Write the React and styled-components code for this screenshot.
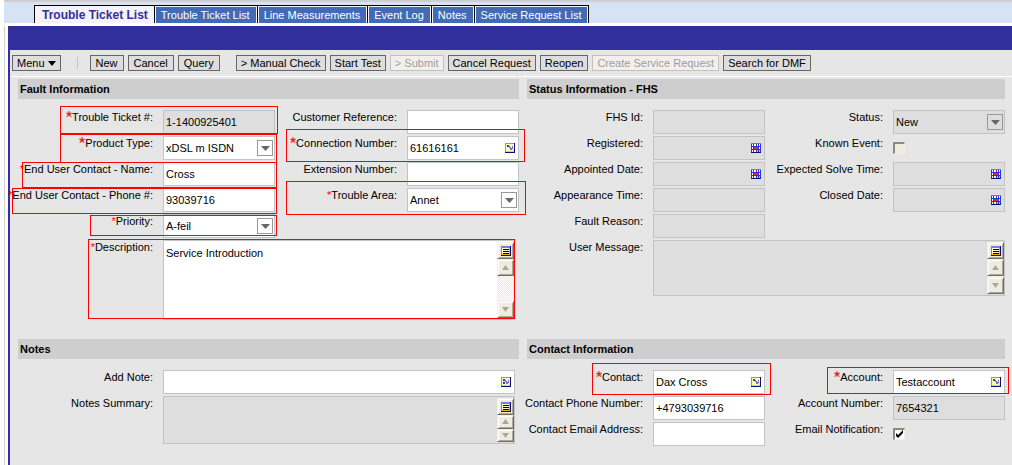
import React from "react";
import styled, { createGlobalStyle, css } from "styled-components";

const GlobalStyle = createGlobalStyle`
  * { box-sizing: border-box; }
  body {
    margin: 0;
    background: #fff;
    color: #000;
    font: 11px/14px "Liberation Sans", Arial, sans-serif;
  }
  button, input, select, textarea { font: inherit; color: inherit; border-radius: 0; }
`;

/* ---------- page frame ---------- */

const Page = styled.div`
  display: flex;
  flex-direction: column;
  min-height: 100vh;
  padding-left: 4px;
`;

const TabBar = styled.nav`
  display: flex;
  height: 23px;
  padding: 3px 0 0 30px;
  border-top: 2px solid #cecece;
  background: #d6e3f5;
`;

const TabStrip = styled.div`
  display: flex;
  border: solid #000;
  border-width: 1px 1px 0;
  background: #f5f2fa;
`;

const Tab = styled.a`
  display: block;
  margin: 1px 1px 0;
  padding: 0 6px 0 5px;
  background: #416bb4;
  color: #fff;
  line-height: 16px;
  text-decoration: none;
  white-space: nowrap;

  ${(p) =>
    p.$active &&
    css`
      padding: 0 5px 0 6px;
      background: #f5f2fa;
      color: #31309c;
      font-size: 12px;
      font-weight: bold;
    `}
`;

const TabDivider = styled.span`
  width: 1px;
  background: #000;
`;

const Frame = styled.div`
  flex: 1;
  display: flex;
  margin-top: 3px;
  padding-left: 3px;
  border-left: 1px solid #cecece;
`;

const Applet = styled.main`
  flex: 1;
  min-width: 0;
  border-left: 2px solid #31309c;
  background: #e6e6e6;
`;

const TitleBand = styled.div`
  height: 24px;
  background: #31309c;
`;

/* ---------- toolbar ---------- */

const Toolbar = styled.div`
  display: flex;
  align-items: center;
  gap: 16px;
  margin-left: 1px;
  padding: 5px 1px;
  border-bottom: 1px solid #fff;
`;

const ButtonGroup = styled.div`
  display: flex;
  gap: 4px;
`;

const ToolButton = styled.button`
  display: flex;
  align-items: center;
  gap: 3px;
  height: 16px;
  padding: 0 ${(p) => (p.$roomy ? 5 : 4)}px;
  border: 1px solid #666;
  background: #dedede;
  line-height: 14px;
  white-space: nowrap;

  &:disabled {
    border-color: #c4c0bb;
    background: #f3f0eb;
    color: #9c9ca5;
  }
`;

const Separator = styled.span`
  width: 1px;
  height: 12px;
  margin-right: -4px;
  background: #c3c3c3;
`;

/* ---------- form panels ---------- */

const Panels = styled.div`
  display: grid;
  grid-template-columns: minmax(0, 501fr) minmax(0, 478fr);
  gap: 19px 8px;
  padding: 2px 7px 19px 8px;
`;

const PanelTitle = styled.h2`
  margin: 0 0 11px;
  padding: 0 2px;
  background: #cecece;
  font-size: 11px;
  line-height: 20px;
`;

const PanelBody = styled.div`
  display: grid;
  grid-template-columns: ${(p) => p.$columns};
  gap: 2px 0;
  align-items: start;
`;

const Cell = styled.div`
  position: relative;
  display: flex;
  grid-column: ${(p) => p.$column};
  min-width: 0;
`;

const Label = styled.label`
  flex: none;
  display: flex;
  justify-content: flex-end;
  width: ${(p) => p.$width}px;
  padding-right: 10px;
  white-space: nowrap;
`;

const Star = styled.span`
  color: #f00;
`;

const StarIcon = styled.svg`
  width: 6px;
  height: 8px;
`;

const Highlight = styled.div`
  position: absolute;
  inset: ${(p) => p.$inset};
  z-index: 1;
  border: 1px solid #f00;
  pointer-events: none;
`;

/* ---------- controls ---------- */

const fieldFace = css`
  border: 1px solid #c3c3c3;
  background: ${(p) => (p.$shaded ? "#dedede" : "#fff")};
`;

const FieldBox = styled.div`
  ${fieldFace}
  flex: 1;
  display: flex;
  align-items: center;
  min-width: 0;
  height: 24px;
  margin-right: ${(p) => p.$trim || 0}px;
`;

const bare = css`
  flex: 1;
  width: 100%;
  min-width: 0;
  margin: 0;
  border: 0;
  outline: 0;
  background: transparent;
  appearance: none;
`;

const TextInput = styled.input`
  ${bare}
  height: 22px;
  padding: 0 2px;
`;

const SelectInput = styled.select`
  ${bare}
  height: 22px;
  padding: 0 2px;
`;

const SelectArrow = styled.span`
  flex: none;
  display: grid;
  place-items: center;
  width: 16px;
  height: 16px;
  margin-right: 1px;
  border: 1px solid #999;
  background: ${(p) => (p.$shaded ? "#dedede" : "#fff")};
  pointer-events: none;
`;

const IconButton = styled.button`
  flex: none;
  width: 10px;
  height: 10px;
  margin-right: 3px;
  padding: 0;
  border: 0;
  background: none;

  svg { display: block; }
`;

const MemoBox = styled.div`
  ${fieldFace}
  flex: 1;
  display: flex;
  min-width: 0;
  height: ${(p) => p.$height}px;
  margin-right: ${(p) => p.$trim || 0}px;
  padding: 1px 0;
`;

const MemoInput = styled.textarea`
  ${bare}
  height: 100%;
  padding: 4px 2px;
  resize: none;
  overflow: hidden;
`;

const MemoRail = styled.div`
  flex: none;
  display: flex;
  flex-direction: column;
  width: 17px;
  background: repeating-conic-gradient(#fff 0 25%, #ece9d8 0 50%) 0 0 / 2px 2px;
`;

const RailButton = styled.button`
  flex: ${(p) => (p.$fixed ? "none" : "0 1 17px")};
  display: grid;
  place-items: center;
  width: 17px;
  height: 17px;
  min-height: 0;
  margin-top: ${(p) => (p.$last ? "auto" : "0")};
  padding: 0;
  border: 1px solid;
  border-color: #f1efe2 #716f64 #716f64 #f1efe2;
  background: #efebde;
  box-shadow: inset 1px 1px #fff, inset -1px -1px #aca899;
`;

const CheckWrap = styled.span`
  position: relative;
  width: 12px;
  height: 12px;
  margin-top: 6px;
`;

const CheckInput = styled.input`
  display: block;
  width: 12px;
  height: 12px;
  margin: 0;
  border: solid;
  border-width: 2px 1px 1px 2px;
  border-color: #8c8a7c #f1efe2 #f1efe2 #8c8a7c;
  background: ${(p) => (p.disabled ? "#f0ebde" : "#fff")};
  appearance: none;
`;

const CheckMark = styled.svg`
  position: absolute;
  inset: 0;
  pointer-events: none;
`;

/* ---------- drawings ---------- */

const Triangle = ({ up, color = "#666", width = 9 }) => (
  <svg width={width} height="5" viewBox="0 0 10 5" preserveAspectRatio="none" aria-hidden="true">
    <path d={up ? "M0 5 L5 0 L10 5Z" : "M0 0 L10 0 L5 5Z"} fill={color} />
  </svg>
);

const PickIcon = ({ multi }) => (
  <svg width="10" height="10" viewBox="0 0 10 10" shapeRendering="crispEdges" aria-hidden="true">
    <path fill="#ffffb0" d="M0 0h10v10H0z" />
    <path fill="#8c8cf0" d="M0 0h9v1H1v8H0z" />
    <path fill="#0c0c82" d="M9 0h1v10H0V9h9z" />
    <path fill="#ffd23c" d="M1 8h8v1H1zM8 6h1v2H8z" />
    <path fill="#3131ce" d={multi ? "M2 2h2v2H2zM2 5h2v2H2z" : "M2 2h2v2H2z"} />
    <path fill="#7373c6" d="M4 3h1v2H4zM5 4h1v3H5zM6 5h1v2H6zM7 3h1v3H7z" />
  </svg>
);

const CalendarIcon = () => (
  <svg width="10" height="10" viewBox="0 0 10 10" shapeRendering="crispEdges" aria-hidden="true">
    <path fill="#3131ce" d="M0 0h10v10H0z" />
    <path fill="#7373e0" d="M0 0h10v1H0z" />
    <path fill="#fff" d="M1 1h1v2H1zM3 1h2v2H3zM6 1h1v2H6zM8 1h1v2H8zM1 4h1v2H1zM8 4h1v2H8z" />
    <path fill="#ffffb5" d="M1 7h1v2H1zM3 7h2v2H3z" />
    <path fill="#ce3131" d="M3 4h4v2H3z" />
    <path fill="#ffbd18" d="M6 7h1v2H6zM8 7h1v2H8z" />
    <path fill="#0c0c82" d="M0 9h10v1H0z" />
  </svg>
);

const ListIcon = () => (
  <svg width="10" height="10" viewBox="0 0 10 10" shapeRendering="crispEdges" aria-hidden="true">
    <path fill="#ffffc6" d="M0 0h10v10H0z" />
    <path fill="#7b7be6" d="M0 0h9v2H1v7H0z" />
    <path fill="#0c0c82" d="M9 0h1v10H0V9h9z" />
    <path fill="#efb500" d="M8 2h1v7H1V8h7z" />
    <path fill="#000" d="M2 3h6v1H2zM2 5h6v1H2zM2 7h6v1H2z" />
  </svg>
);

/* ---------- composed fields ---------- */

const Field = ({ id, label, width, column, mark, highlight, children }) => (
  <Cell $column={column}>
    <Label htmlFor={id} $width={width}>
      {mark === "icon" && (
        <StarIcon viewBox="0 0 6 8" role="img" aria-label="required">
          <path
            d="M3 1 L3.8 3 H6 L4.4 4.4 L5.2 7 L3 5.5 L0.8 7 L1.6 4.4 L0 3 H2.2Z"
            fill="#d22"
            stroke="#e66"
            strokeWidth="0.7"
          />
        </StarIcon>
      )}
      {mark === "text" && <Star>*</Star>}
      {label}:
    </Label>
    {children}
    {highlight && <Highlight $inset={highlight} />}
  </Cell>
);

const TextField = ({ value = "", shaded, action, trim, id, ...rest }) => (
  <Field id={id} {...rest}>
    <FieldBox $shaded={shaded} $trim={trim}>
      <TextInput id={id} type="text" defaultValue={value} readOnly={shaded} />
      {action && (
        <IconButton type="button" aria-label={`Pick ${rest.label}`}>
          {action === "calendar" ? <CalendarIcon /> : <PickIcon multi={action === "multi"} />}
        </IconButton>
      )}
    </FieldBox>
  </Field>
);

const SelectField = ({ value, shaded, id, ...rest }) => (
  <Field id={id} {...rest}>
    <FieldBox $shaded={shaded}>
      <SelectInput id={id} defaultValue={value}>
        <option>{value}</option>
      </SelectInput>
      <SelectArrow $shaded={shaded}>
        <Triangle />
      </SelectArrow>
    </FieldBox>
  </Field>
);

const MemoField = ({ value = "", shaded, height, trim, id, ...rest }) => (
  <Field id={id} column="1 / -1" {...rest}>
    <MemoBox $shaded={shaded} $height={height} $trim={trim}>
      <MemoInput id={id} defaultValue={value} readOnly={shaded} />
      <MemoRail>
        <RailButton type="button" $fixed aria-label={`Open ${rest.label}`}>
          <ListIcon />
        </RailButton>
        <RailButton type="button" aria-label="Scroll up">
          <Triangle up color="#aca899" width={7} />
        </RailButton>
        <RailButton type="button" $last aria-label="Scroll down">
          <Triangle color="#aca899" width={7} />
        </RailButton>
      </MemoRail>
    </MemoBox>
  </Field>
);

const CheckField = ({ id, checked, disabled, ...rest }) => (
  <Field id={id} {...rest}>
    <CheckWrap>
      <CheckInput id={id} type="checkbox" defaultChecked={checked} disabled={disabled} />
      {checked && (
        <CheckMark width="12" height="12" viewBox="0 0 12 12" aria-hidden="true">
          <path d="M3 5v3l2 2 5-5V2L5 7z" fill="#000" />
        </CheckMark>
      )}
    </CheckWrap>
  </Field>
);

const Panel = ({ title, columns, children }) => (
  <section>
    <PanelTitle>{title}</PanelTitle>
    <PanelBody $columns={columns}>{children}</PanelBody>
  </section>
);

/* ---------- data ---------- */

const tabs = [
  "Trouble Ticket List",
  "Trouble Ticket List",
  "Line Measurements",
  "Event Log",
  "Notes",
  "Service Request List",
];

const actions = [
  { text: "> Manual Check" },
  { text: "Start Test" },
  { text: "> Submit", disabled: true },
  { text: "Cancel Request" },
  { text: "Reopen" },
  { text: "Create Service Request", disabled: true },
  { text: "Search for DMF" },
];

const LEFT = "minmax(0, 257fr) minmax(0, 244fr)";
const RIGHT = "minmax(0, 238fr) minmax(0, 240fr)";

/* label widths of the four form columns */
const A = { width: 145, column: 1 };
const B = { width: 132, column: 2 };
const C = { width: 126, column: 1 };
const D = { width: 128, column: 2 };

export default function App() {
  return (
    <Page>
      <GlobalStyle />
      <TabBar>
        <TabStrip>
          {tabs.map((name, i) => (
            <React.Fragment key={i}>
              {i > 0 && <TabDivider />}
              <Tab href="#" $active={i === 0}>
                {name}
              </Tab>
            </React.Fragment>
          ))}
        </TabStrip>
      </TabBar>
      <Frame>
        <Applet>
          <TitleBand />
          <Toolbar>
            <ToolButton type="button">
              Menu <Triangle color="#000" width={8} />
            </ToolButton>
            <Separator />
            <ButtonGroup>
              <ToolButton type="button" $roomy>New</ToolButton>
              <ToolButton type="button" $roomy>Cancel</ToolButton>
              <ToolButton type="button" $roomy>Query</ToolButton>
            </ButtonGroup>
            <ButtonGroup>
              {actions.map((a) => (
                <ToolButton key={a.text} type="button" disabled={a.disabled}>
                  {a.text}
                </ToolButton>
              ))}
            </ButtonGroup>
          </Toolbar>

          <Panels>
            <Panel title="Fault Information" columns={LEFT}>
              <TextField {...A} id="ticket" label="Trouble Ticket #" value="1-1400925401" shaded mark="icon" highlight="-4px -3px 0 42px" />
              <TextField {...B} id="reference" label="Customer Reference" />
              <SelectField {...A} id="product" label="Product Type" value="xDSL m ISDN" mark="icon" highlight="-2px -2px -3px 42px" />
              <TextField {...B} id="connection" label="Connection Number" value="61616161" action="pick" mark="icon" highlight="-7px -6px -2px 11px" />
              <TextField {...A} id="name" label="End User Contact - Name" value="Cross" mark="text" highlight="0 -2px -2px 4px" />
              <TextField {...B} id="extension" label="Extension Number" />
              <TextField {...A} id="phone" label="End User Contact - Phone #" value="93039716" mark="text" highlight="0 -2px -2px -6px" />
              <SelectField {...B} id="area" label="Trouble Area" value="Annet" mark="text" highlight="-7px -7px -3px 11px" />
              <SelectField {...A} id="priority" label="Priority" value="A-feil" mark="text" highlight="1px -2px 2px 72px" />
              <MemoField width={145} id="description" label="Description" value="Service Introduction" height={80} trim={4} mark="text" highlight="-1px 4px 1px 70px" />
            </Panel>

            <Panel title="Status Information - FHS" columns={RIGHT}>
              <TextField {...C} id="fhs" label="FHS Id" shaded />
              <SelectField {...D} id="status" label="Status" value="New" shaded />
              <TextField {...C} id="registered" label="Registered" shaded action="calendar" />
              <CheckField {...D} id="known" label="Known Event" disabled />
              <TextField {...C} id="appointed" label="Appointed Date" shaded action="calendar" />
              <TextField {...D} id="solve" label="Expected Solve Time" shaded action="calendar" />
              <TextField {...C} id="appearance" label="Appearance Time" shaded />
              <TextField {...D} id="closed" label="Closed Date" shaded action="calendar" />
              <TextField {...C} id="reason" label="Fault Reason" shaded />
              <MemoField width={126} id="message" label="User Message" shaded height={56} />
            </Panel>

            <Panel title="Notes" columns={LEFT}>
              <TextField width={145} column="1 / -1" id="note" label="Add Note" action="multi" trim={4} />
              <MemoField width={145} id="summary" label="Notes Summary" shaded height={48} trim={4} />
            </Panel>

            <Panel title="Contact Information" columns={RIGHT}>
              <TextField {...C} id="contact" label="Contact" value="Dax Cross" action="pick" mark="icon" highlight="-7px -6px -1px 65px" />
              <TextField {...D} id="account" label="Account" value="Testaccount" action="pick" mark="icon" highlight="-3px -4px 0 62px" />
              <TextField {...C} id="contactPhone" label="Contact Phone Number" value="+4793039716" />
              <TextField {...D} id="accountNumber" label="Account Number" value="7654321" shaded />
              <TextField {...C} id="email" label="Contact Email Address" />
              <CheckField {...D} id="notify" label="Email Notification" checked />
            </Panel>
          </Panels>
        </Applet>
      </Frame>
    </Page>
  );
}
